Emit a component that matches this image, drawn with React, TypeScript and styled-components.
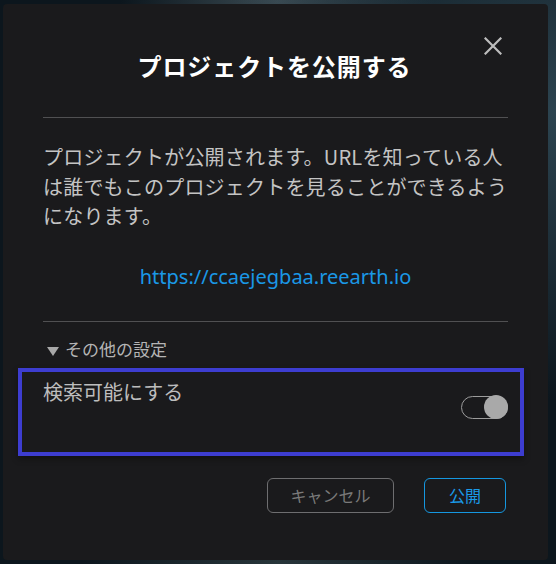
import React from "react";
import styled, { createGlobalStyle } from "styled-components";

const GlobalStyle = createGlobalStyle`
  html, body {
    margin: 0;
    padding: 0;
    width: 556px;
    height: 564px;
    overflow: hidden;
    background:
      radial-gradient(ellipse at 100% 20%, #2c4450 0%, rgba(20,34,42,0) 45%),
      radial-gradient(ellipse at 50% 0%, #3a4a52 0%, rgba(20,34,42,0) 40%),
      radial-gradient(ellipse at 50% 100%, #27353a 0%, rgba(20,34,42,0) 50%),
      #0c161d;
    font-family: "Noto Sans CJK JP", "Noto Sans", sans-serif;
  }
`;

const Stage = styled.div`
  width: 556px;
  height: 564px;
  box-sizing: border-box;
  padding: 4px 8px 4px 3px;
  display: flex;
`;

const Modal = styled.div`
  flex: 1;
  background: #1a1a1c;
  border-radius: 4px;
  box-sizing: border-box;
  padding: 46px 40px 0 40px;
  display: flex;
  flex-direction: column;
`;

const Header = styled.div`
  display: grid;
  grid-template-columns: 1fr auto 1fr;
  align-items: start;
`;

const Title = styled.h1`
  grid-column: 2;
  margin: 0 0 0 -2px;
  font-family: "Noto Sans CJK JP", sans-serif;
  font-weight: 700;
  font-size: 24px;
  line-height: 32px;
  color: #ffffff;
  letter-spacing: 0.9px;
`;

const CloseButton = styled.button`
  grid-column: 3;
  justify-self: end;
  margin: -13px 6px 0 0;
  padding: 0;
  width: 18px;
  height: 18px;
  border: none;
  background: none;
  cursor: pointer;
  display: flex;
`;

const Divider = styled.hr<{ $top: number }>`
  margin: ${(p) => p.$top}px 0 0 0;
  border: none;
  height: 1px;
  background: #505052;
`;

const Description = styled.p`
  margin: 24px 0 0 0;
  font-size: 20px;
  line-height: 29.5px;
  color: #c4c4c4;
  letter-spacing: 0.2px;
`;

const Link = styled.a`
  margin-top: 32px;
  align-self: center;
  font-family: "Noto Sans", sans-serif;
  font-size: 20px;
  line-height: 28px;
  color: #1a98e6;
  text-decoration: none;
`;

const Summary = styled.div`
  margin: 15px 0 0 4px;
  display: flex;
  align-items: center;
  gap: 6px;
  font-size: 17px;
  line-height: 24px;
  color: #b4b4b4;
`;

const Triangle = styled.svg`
  margin-top: 5px;
`;

const SettingBox = styled.div`
  margin: 7px -16px 0 -25px;
  height: 88px;
  box-sizing: border-box;
  border: 4px solid #3d3dd0;
  padding: 6px 12px 0 21px;
  display: flex;
  justify-content: space-between;
  align-items: flex-start;
  box-shadow: 0 3px 6px rgba(0, 0, 0, 0.35);
`;

const SettingLabel = styled.span`
  font-size: 20px;
  line-height: 28px;
  color: #bdbdbd;
`;

const Toggle = styled.div`
  margin-top: 18px;
  width: 47px;
  height: 23px;
  box-sizing: border-box;
  border: 1px solid #9c9c9c;
  border-radius: 12px;
  display: flex;
  justify-content: flex-end;
  align-items: center;
`;

const Knob = styled.span`
  width: 24px;
  height: 24px;
  margin-right: -1px;
  border-radius: 50%;
  background: #a9a9a9;
`;

const Footer = styled.div`
  margin: 22px 2px 0 0;
  display: flex;
  justify-content: flex-end;
  gap: 30px;
`;

const Button = styled.button<{ $primary?: boolean; $width: number }>`
  width: ${(p) => p.$width}px;
  height: 35px;
  box-sizing: border-box;
  border-radius: 6px;
  background: transparent;
  border: 1.5px solid ${(p) => (p.$primary ? "#1597e0" : "#6e6e70")};
  color: ${(p) => (p.$primary ? "#1a9be8" : "#7a7a7a")};
  font-family: "Noto Sans CJK JP", sans-serif;
  font-size: 16px;
  line-height: 20px;
  padding: 0;
  cursor: pointer;
`;

export default function App() {
  return (
    <>
      <GlobalStyle />
      <Stage>
        <Modal>
          <Header>
            <Title>プロジェクトを公開する</Title>
            <CloseButton aria-label="close">
              <svg width="18" height="18" viewBox="0 0 18 18">
                <path
                  d="M1.5 1.5 L16.5 16.5 M16.5 1.5 L1.5 16.5"
                  stroke="#bdbdbd"
                  strokeWidth="2.2"
                  strokeLinecap="square"
                />
              </svg>
            </CloseButton>
          </Header>
          <Divider $top={35} />
          <Description>
            プロジェクトが公開されます。URLを知っている人
            <br />
            は誰でもこのプロジェクトを見ることができるよう
            <br />
            になります。
          </Description>
          <Link href="#">https://ccaejegbaa.reearth.io</Link>
          <Divider $top={30} />
          <Summary>
            <Triangle width="12" height="9" viewBox="0 0 12 9">
              <path d="M0 0 L12 0 L6 9 Z" fill="#a8a8a8" />
            </Triangle>
            その他の設定
          </Summary>
          <SettingBox>
            <SettingLabel>検索可能にする</SettingLabel>
            <Toggle>
              <Knob />
            </Toggle>
          </SettingBox>
          <Footer>
            <Button $width={127}>キャンセル</Button>
            <Button $primary $width={82}>
              公開
            </Button>
          </Footer>
        </Modal>
      </Stage>
    </>
  );
}
